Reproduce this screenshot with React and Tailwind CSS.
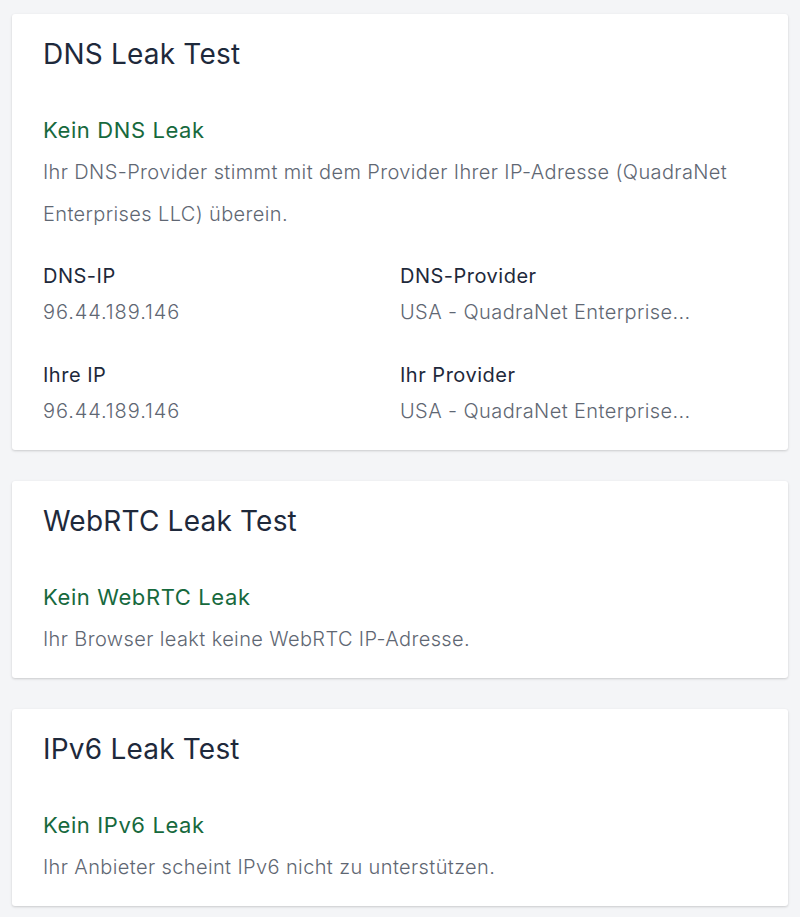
import React from "react";

const font = { fontFamily: "Inter, 'Noto Sans', sans-serif" };

function Card({ title, status, children }) {
  return (
    <div className="w-full bg-white rounded-[3px] shadow-[0_1px_3px_rgba(0,0,0,0.12),0_1px_2px_rgba(0,0,0,0.06)] px-[31px] pt-[22px]">
      <h2 className="text-[28px] leading-[36px] tracking-[0.2px] text-[#1e293b] font-normal">{title}</h2>
      <div className="mt-[43px] text-[22px] leading-[30px] tracking-[0.6px] text-[#17693d]">{status}</div>
      {children}
    </div>
  );
}

function Field({ label, value, digits }) {
  return (
    <div>
      <div className="text-[20px] leading-[36px] tracking-[0.5px] text-[#1e293b]">{label}</div>
      <div className={"text-[20px] leading-[36px] text-[#5f6773] font-light " + (digits ? "tracking-[0.9px]" : "tracking-[0.4px]")}>{value}</div>
    </div>
  );
}

export default function App() {
  return (
    <div className="min-h-screen bg-[#f4f5f7] px-3 pt-[14px] pb-3 flex flex-col gap-[31px]" style={font}>
      <Card title="DNS Leak Test" status="Kein DNS Leak">
        <p className="mt-[6px] text-[20px] leading-[42px] tracking-[0.38px] text-[#5f6773] font-light">
          Ihr DNS-Provider stimmt mit dem Provider Ihrer IP-Adresse (QuadraNet Enterprises LLC) überein.
        </p>
        <div className="mt-[23px] grid grid-cols-2 gap-y-[27px] pb-[21px]">
          <Field label="DNS-IP" value="96.44.189.146" digits />
          <Field label="DNS-Provider" value="USA - QuadraNet Enterprise..." />
          <Field label="Ihre IP" value="96.44.189.146" digits />
          <Field label="Ihr Provider" value="USA - QuadraNet Enterprise..." />
        </div>
      </Card>
      <Card title="WebRTC Leak Test" status="Kein WebRTC Leak">
        <p className="mt-[6px] pb-[18px] text-[20px] leading-[42px] tracking-[0.38px] text-[#5f6773] font-light">
          Ihr Browser leakt keine WebRTC IP-Adresse.
        </p>
      </Card>
      <Card title="IPv6 Leak Test" status="Kein IPv6 Leak">
        <p className="mt-[6px] pb-[18px] text-[20px] leading-[42px] tracking-[0.38px] text-[#5f6773] font-light">
          Ihr Anbieter scheint IPv6 nicht zu unterstützen.
        </p>
      </Card>
    </div>
  );
}
